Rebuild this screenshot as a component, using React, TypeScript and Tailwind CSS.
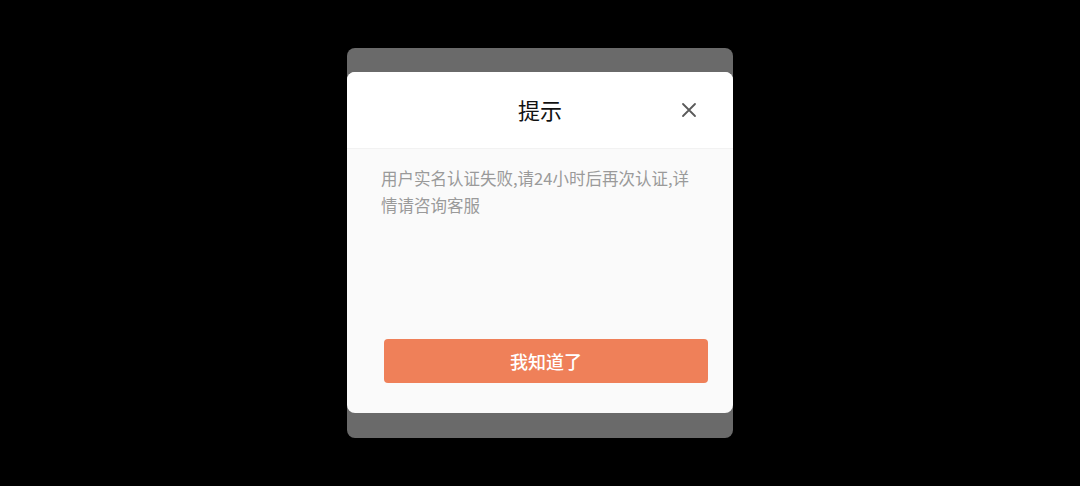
const font = { fontFamily: '"Noto Sans CJK SC", "Noto Sans", sans-serif' };

export default function App() {
  return (
    <div
      className="min-h-screen bg-black flex items-center justify-center"
      style={font}
    >
      {/* grey backdrop card */}
      <div className="w-[386px] bg-[#6a6a6a] rounded-[8px] pt-[24px] pb-[25px]">
        <div className="bg-[#fafafa] rounded-[8px] overflow-hidden">
          {/* Header */}
          <div className="relative h-[77px] bg-white flex items-center justify-center border-b border-[#f2f2f2]">
            <span className="text-[22px] leading-none text-[#111] -mt-[2px]">提示</span>
            <button className="absolute right-[36px] top-1/2 -translate-y-1/2 text-[#5a5a5a]">
              <svg width="16" height="16" viewBox="0 0 16 16" fill="none">
                <path
                  d="M2 2 L14 14 M14 2 L2 14"
                  stroke="currentColor"
                  strokeWidth="1.8"
                  strokeLinecap="round"
                />
              </svg>
            </button>
          </div>

          {/* Body */}
          <div className="h-[264px] flex flex-col">
            <p className="px-[34px] pt-[16px] text-[16.5px] leading-[27px] text-[#9a9a9a]">
              用户实名认证失败,请24小时后再次认证,详情请咨询客服
            </p>
            <button className="mt-auto mb-[30px] ml-[37px] mr-[25px] h-[44px] rounded-[4px] bg-[#ef8059] text-white text-[18px] font-medium">
              我知道了
            </button>
          </div>
        </div>
      </div>
    </div>
  );
}
